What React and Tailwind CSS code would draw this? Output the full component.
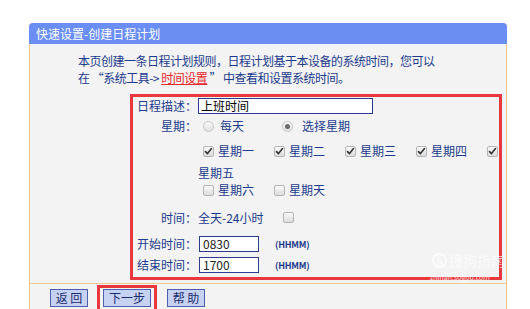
import { useState } from "react";

const FONT = { fontFamily: '"Noto Sans CJK SC", "Liberation Sans", sans-serif' };

function Check({ checked }) {
  return (
    <span className="w-[11px] h-[11px] flex-shrink-0 rounded-[2px] border border-[#b5b5b5] bg-gradient-to-b from-[#fafafa] to-[#dcdcdc] flex items-center justify-center">
      {checked && (
        <svg width="9" height="9" viewBox="0 0 9 9" fill="none">
          <path d="M1.5 4.6l2 2 4-5" stroke="#333" strokeWidth="1.6" strokeLinecap="round" strokeLinejoin="round" />
        </svg>
      )}
    </span>
  );
}

function Radio({ checked }) {
  return (
    <span className="w-[11px] h-[11px] flex-shrink-0 rounded-full border border-[#c4c4c4] bg-gradient-to-b from-[#fafafa] to-[#e2e2e2] flex items-center justify-center">
      {checked && <span className="w-[5px] h-[5px] rounded-full bg-[#6a6a6a]" />}
    </span>
  );
}

function Label({ children }) {
  return <span className="w-[64px] text-right flex-shrink-0">{children}</span>;
}

export default function App() {
  const [days] = useState([true, true, true, true, true]);

  return (
    <div className="w-[530px] h-[309px] overflow-hidden bg-white pt-[23px] pl-[29px] text-[12px] text-[#1c3b8c]" style={FONT}>
      <div className="relative w-[478px] h-[300px] rounded-t-[4px] border-x border-[#f3c78d] bg-[#f3f3f3]">
        {/* Header */}
        <div className="h-[21px] -mx-px rounded-t-[4px] bg-[#6a8ef4] text-white pl-[7px] flex items-center leading-none">
          快速设置-创建日程计划
        </div>

        {/* Description */}
        <div className="pl-[48px] pt-[8px] leading-[17px] tracking-[-0.5px] text-[#1c3b8c]">
          <p>本页创建一条日程计划规则，日程计划基于本设备的系统时间，您可以</p>
          <p>
            在 “系统工具-&gt; <span className="text-[#e8262b] underline">时间设置</span> ” 中查看和设置系统时间。
          </p>
        </div>

        {/* Form */}
        <div className="ml-[100px] mt-[8px] w-[372px] border-[3px] border-[#e8383d] flex flex-col leading-none">
          <div className="h-[18px] flex items-center">
            <Label>日程描述：</Label>
            <span className="ml-px w-[175px] h-[16px] border border-[#2b3c8f] bg-white text-black pl-[2px] flex items-center">上班时间</span>
          </div>
          <div className="h-[22px] flex items-center">
            <Label>星期：</Label>
            <span className="ml-[6px] flex items-center gap-[6px] w-[79px]">
              <Radio />
              每天
            </span>
            <span className="flex items-center gap-[9px]">
              <Radio checked />
              选择星期
            </span>
          </div>
          <div className="h-[28px] flex items-center pl-[65px]">
            {["星期一", "星期二", "星期三", "星期四"].map((d, i) => (
              <span key={d} className="w-[71px] flex-shrink-0 flex items-center gap-[4px] pl-[5px]">
                <Check checked={days[i]} />
                {d}
              </span>
            ))}
            <span className="flex-shrink-0 pl-[5px] flex items-center">
              <Check checked={days[4]} />
            </span>
          </div>
          <div className="h-[16px] flex items-center pl-[65px]">星期五</div>
          <div className="h-[18px] flex items-center pl-[65px]">
            {["星期六", "星期天"].map((d) => (
              <span key={d} className="w-[71px] flex-shrink-0 flex items-center gap-[4px] pl-[5px]">
                <Check />
                {d}
              </span>
            ))}
          </div>
          <div className="h-[37px] flex items-center">
            <Label>时间：</Label>
            <span className="ml-px w-[85px]">全天-24小时</span>
            <Check />
          </div>
          <div className="h-[16px] flex items-center">
            <Label>开始时间：</Label>
            <span className="ml-[2px] w-[60px] h-[16px] border border-[#2b3c8f] bg-white text-[#222] pl-[3px] flex items-center">0830</span>
            <span className="ml-[16px] text-[9px] font-bold tracking-tight">(HHMM)</span>
          </div>
          <div className="h-[16px] mt-[5px] mb-[4px] flex items-center">
            <Label>结束时间：</Label>
            <span className="ml-[2px] w-[60px] h-[16px] border border-[#2b3c8f] bg-white text-[#222] pl-[3px] flex items-center">1700</span>
            <span className="ml-[16px] text-[9px] font-bold tracking-tight">(HHMM)</span>
          </div>
        </div>

        {/* Buttons */}
        <div className="mt-[3px] border-t border-[#f3c78d] flex items-start pl-[20px] text-[#1a2a6e] leading-none">
          <button className="mt-[5px] w-[38px] h-[18px] border border-[#4a5fae] bg-[#c7d2f3] flex items-center justify-center">
            返 回
          </button>
          <div className="ml-[9px] mt-px border-[3px] border-[#e8383d] px-[3px] pt-px pb-[4px]">
            <button className="w-[48px] h-[18px] border border-[#4a5fae] bg-[#c7d2f3] flex items-center justify-center">
              下一步
            </button>
          </div>
          <button className="ml-[10px] mt-[5px] w-[38px] h-[18px] border border-[#4a5fae] bg-[#c7d2f3] flex items-center justify-center">
            帮 助
          </button>
        </div>

        {/* Watermark */}
        <div className="absolute left-[402px] top-[227px] flex items-center gap-[2px] text-white/70 text-[14px]">
          <span className="w-[15px] h-[15px] rounded-full border-2 border-white/70 text-[10px] font-bold flex items-center justify-center leading-none">S</span>
          搜狗指南
        </div>
        <div className="absolute left-[400px] top-[251px] text-[7px] text-white/80 leading-none">zhinan.sogou.com</div>
      </div>
    </div>
  );
}
